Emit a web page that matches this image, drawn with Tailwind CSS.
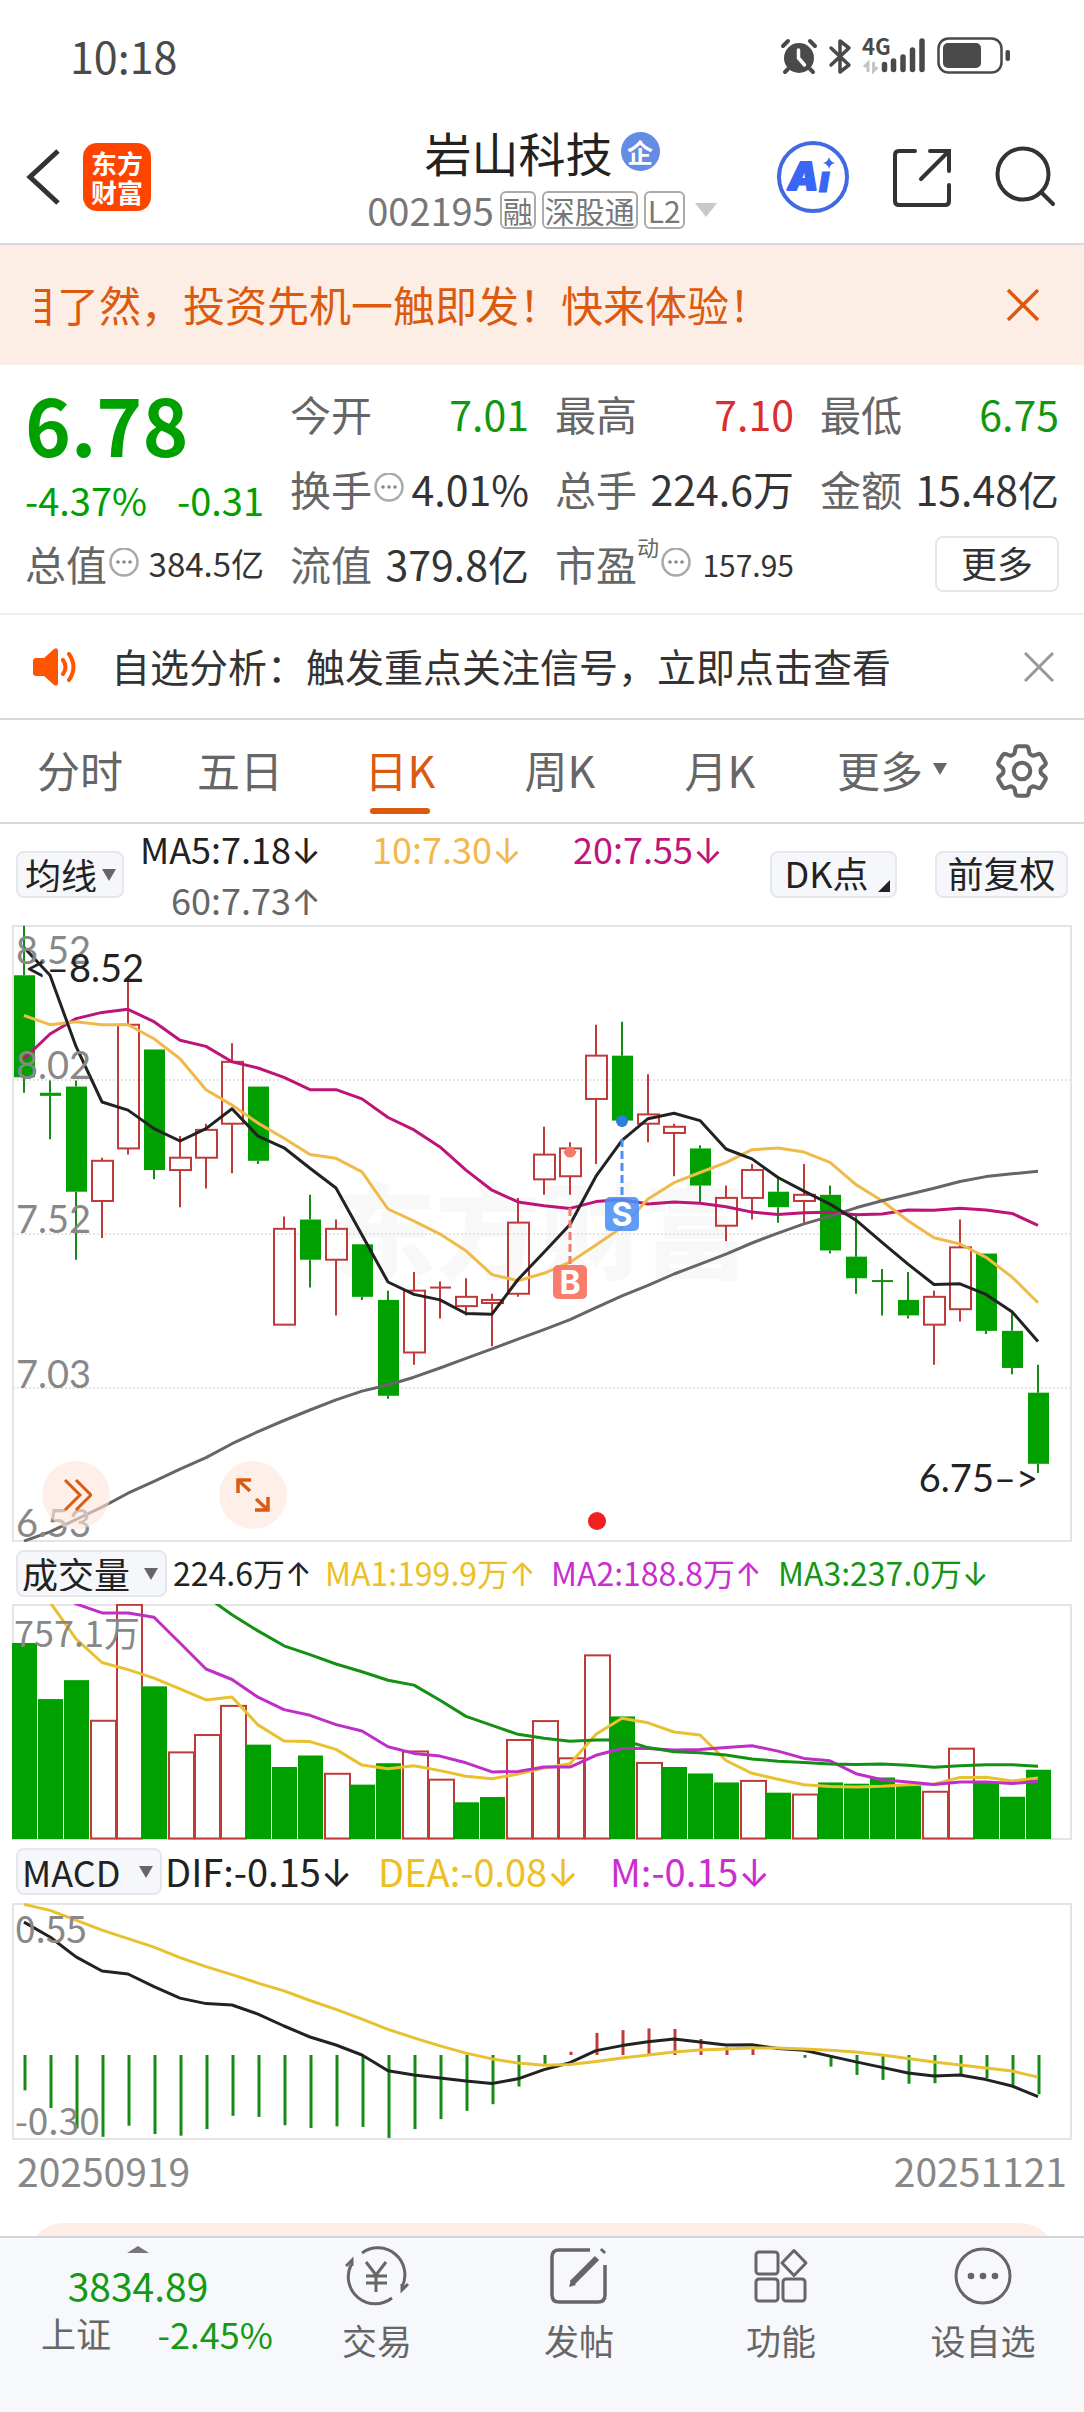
<!DOCTYPE html>
<html lang="zh-CN">
<head>
<meta charset="utf-8">
<meta name="viewport" content="width=device-width, initial-scale=1">
<title>岩山科技 002195</title>
<script src="https://cdn.jsdelivr.net/npm/@tailwindcss/browser@4"></script>
</head>
<body class="min-h-screen bg-white font-['Noto_Sans_CJK_SC',sans-serif] text-[#333] leading-none">
<div class="flex min-h-screen flex-col">

<!-- Status bar -->
<div class="flex h-[114px] items-center justify-between pl-[70px] pr-[74px] pb-[2px] text-[#4a4a4a]">
  <span class="pb-[2px] text-[43px]">10:18</span>
  <svg class="h-[40px] w-[230px] overflow-visible" viewBox="780 36 230 40" fill="none" stroke="#4a4a4a" aria-hidden="true">
    <circle cx="799" cy="58" r="15" fill="#4a4a4a" stroke="none"/>
    <path d="M783 46l5-5M815 46l-5-5M788 69l-3 3M810 69l3 3" stroke-width="4" stroke-linecap="round"/>
    <path d="M798.500 50v8l6 7" stroke="#fff" stroke-width="3.500" stroke-linecap="round"/>
    <path d="M831 48l18 17-9 7V41l9 7-18 17" stroke-width="3.5" stroke-linejoin="round" stroke-linecap="round"/>
    <text x="862" y="55" font-size="22" font-weight="700" fill="#4a4a4a" stroke="none" font-family="Noto Sans CJK SC">4G</text>
    <path d="M868 72V63l-4 4M873.500 62v9l4-4" stroke="#c4c4c4" stroke-width="3"/>
    <path d="M884.500 69.500v-5M893.500 69.500V61M903 69.500V57M912.500 69.500V50M922 69.500V41" stroke-width="5.500" stroke-linecap="round"/>
    <rect x="938.500" y="38.500" width="63" height="34" rx="10" stroke-width="2.500"/>
    <rect x="943" y="43" width="38" height="25" rx="5" fill="#4a4a4a" stroke="none"/>
    <rect x="1005.500" y="50" width="4.500" height="11" rx="2" fill="#4a4a4a" stroke="none"/>
  </svg>
</div>

<!-- Header -->
<header class="grid h-[131px] grid-cols-[1fr_auto_1fr] items-center border-b-2 border-[#d9d9d9] pb-1">
  <div class="flex items-center gap-[23px] pl-[26px]">
    <button aria-label="返回"><svg class="h-[56px] w-[34px]" viewBox="0 0 34 56" fill="none" stroke="#333" stroke-width="5"><path d="M32 2L4 28l28 26"/></svg></button>
    <a href="#" class="flex size-[68px] flex-col items-center justify-center rounded-[14px] bg-[#ff4400] text-[26px] leading-[29px] font-bold text-white"><span>东方</span><span>财富</span></a>
  </div>
  <div class="flex flex-col items-center">
    <div class="flex items-center gap-[8px]">
      <h1 class="text-[47px] leading-[54px] text-[#222]">岩山科技</h1>
      <span class="flex size-[39px] items-center justify-center rounded-full bg-[#648ce4] text-[26px] font-bold text-white">企</span>
    </div>
    <div class="mt-[12px] flex items-center gap-[6px] text-[#777]">
      <span class="text-[38px] leading-[34px]">002195</span>
      <span class="flex h-[38px] items-center rounded-[6px] border-2 border-[#aaa] px-[1px] text-[30px]">融</span>
      <span class="flex h-[38px] items-center rounded-[6px] border-2 border-[#aaa] px-[1px] text-[30px]">深股通</span>
      <span class="flex h-[38px] items-center rounded-[6px] border-2 border-[#aaa] px-[2px] text-[30px]">L2</span>
      <svg class="ml-[4px] h-[14px] w-[22px]" viewBox="0 0 22 14"><path d="M0 0h22L11 14z" fill="#c8c8c8"/></svg>
    </div>
  </div>
  <div class="flex items-center justify-end gap-[42px] pr-[28px]">
    <button aria-label="AI 助手"><svg class="size-[74px]" viewBox="0 0 74 74"><circle cx="37" cy="37" r="34" fill="none" stroke="#4169e1" stroke-width="4"/><g fill="#3a66f5" font-family="Inter" font-weight="900" font-style="italic"><text x="12" y="50" font-size="38" stroke="#3a66f5" stroke-width="2" stroke-linejoin="round">A</text><text x="43" y="52" font-size="36" stroke="#3a66f5">ı</text></g><path d="M53 17q1 5 6 6-5 1-6 6-1-5-6-6 5-1 6-6z" fill="#3a66f5"/></svg></button>
    <button aria-label="分享"><svg class="size-[60px]" viewBox="0 0 60 60" fill="none" stroke="#333" stroke-width="4" stroke-linecap="round"><path d="M23 4H7q-4 0-4 4v46q0 4 4 4h46q4 0 4-4V38M38 4h19v20M56 5L29 32"/></svg></button>
    <button aria-label="搜索"><svg class="size-[62px]" viewBox="0 0 62 62" fill="none" stroke="#333" stroke-width="4" stroke-linecap="round"><circle cx="29" cy="28" r="25.500"/><path d="M48 47l11 11"/></svg></button>
  </div>
</header>

<!-- Promo marquee -->
<div class="flex h-[120px] items-center justify-between bg-[#fceee5] pr-[44px] pl-[35px] text-[#dc5a10]">
  <div class="min-w-0 flex-1 overflow-hidden pb-[2px]"><a href="#" class="-ml-[20px] block text-[42px] leading-[60px] whitespace-nowrap">目了然，投资先机一触即发！快来体验！</a></div>
  <button aria-label="关闭广告"><svg class="size-[34px]" viewBox="0 0 34 34" stroke="currentColor" stroke-width="3.500"><path d="M2 2l30 30M32 2L2 32"/></svg></button>
</div>

<!-- Quote -->
<section class="grid grid-cols-4 gap-x-[26px] border-b-2 border-[#eee] px-[25px] pt-[11px] pb-[12px] text-[41px] whitespace-nowrap">
  <div class="row-span-2 flex flex-col text-[#00a000]">
    <strong class="mt-[3px] text-[78px] leading-[88px] font-bold">6.78</strong>
    <div class="flex justify-between pt-[13px] text-[38px] leading-[40px]"><span>-4.37%</span><span>-0.31</span></div>
  </div>
  <div class="flex h-[75px] items-center justify-between"><span class="text-[#666]">今开</span><span class="text-[#109610]">7.01</span></div>
  <div class="flex h-[75px] items-center justify-between"><span class="text-[#666]">最高</span><span class="text-[#d83030]">7.10</span></div>
  <div class="flex h-[75px] items-center justify-between"><span class="text-[#666]">最低</span><span class="text-[#109610]">6.75</span></div>
  <div class="flex h-[75px] items-center justify-between"><span class="flex items-center text-[#666]">换手<svg class="size-[32px]" viewBox="0 0 32 32"><use href="#info"/></svg></span><span>4.01%</span></div>
  <div class="flex h-[75px] items-center justify-between"><span class="text-[#666]">总手</span><span>224.6万</span></div>
  <div class="flex h-[75px] items-center justify-between"><span class="text-[#666]">金额</span><span>15.48亿</span></div>
  <div class="flex h-[75px] items-center justify-between"><span class="flex items-center text-[#666]">总值<svg class="size-[32px]" viewBox="0 0 32 32"><use href="#info"/></svg></span><span class="text-[33px]">384.5亿</span></div>
  <div class="flex h-[75px] items-center justify-between"><span class="text-[#666]">流值</span><span>379.8亿</span></div>
  <div class="flex h-[75px] items-center justify-between"><span class="flex items-center text-[#666]">市盈<span class="-mt-[36px] text-[22px]">动</span><svg class="size-[32px]" viewBox="0 0 32 32"><use href="#info"/></svg></span><span class="text-[30px]">157.95</span></div>
  <div class="flex h-[75px] items-center justify-end"><button class="h-[56px] w-[124px] rounded-[8px] border-2 border-[#e6e6e6] pb-[4px] text-[36px]">更多</button></div>
</section>

<!-- Notice -->
<div class="flex h-[105px] items-center border-b-2 border-[#d9d9d9] pr-[30px] pl-[33px]">
  <svg class="h-[38px] w-[46px]" viewBox="0 0 46 38" fill="none" stroke="#ff5500" aria-hidden="true"><path d="M0 13q0-3 3-3h8L21 1q4-2 4 2v32q0 4-4 2l-10-9H3q-3 0-3-3z" fill="#ff5500" stroke="none"/><path d="M30 12q5 7 0 14M36 6q9 13 0 26" stroke-width="4" stroke-linecap="round"/></svg>
  <a href="#" class="ml-[32px] flex-1 pb-[4px] text-[39px] leading-[44px] whitespace-nowrap">自选分析：触发重点关注信号，立即点击查看</a>
  <button aria-label="关闭提示"><svg class="size-[30px]" viewBox="0 0 30 30" stroke="#999" stroke-width="3"><path d="M1 1l28 28M29 1L1 29"/></svg></button>
</div>

<!-- Period tabs -->
<nav class="grid h-[104px] grid-cols-[repeat(6,160fr)_124fr] border-b-2 border-[#d9d9d9] text-[43px] text-[#666]">
  <button class="pb-[4px]">分时</button>
  <button class="pb-[4px]">五日</button>
  <button class="relative pb-[4px] text-[#dc5a10]">日K<span class="absolute bottom-[8px] left-1/2 h-[6px] w-[60px] -translate-x-1/2 rounded-full bg-[#dc5a10]"></span></button>
  <button class="pb-[4px]">周K</button>
  <button class="pb-[4px]">月K</button>
  <button class="flex items-center justify-center gap-[10px] pb-[4px] pl-[24px]">更多<svg class="h-[12px] w-[14px]" viewBox="0 0 14 12"><path d="M0 0h14L7 12z" fill="#666"/></svg></button>
  <button class="flex items-center justify-center" aria-label="设置"><svg class="size-[66px]" viewBox="0 0 24 24" fill="none" stroke="#666" stroke-width="1.500"><path d="M9.594 3.940c.09-.542.56-.94 1.110-.94h2.593c.55 0 1.020.398 1.110.94l.213 1.281c.063.374.313.686.645.87.074.04.147.083.22.127.324.196.72.257 1.075.124l1.217-.456a1.125 1.125 0 011.370.49l1.296 2.247a1.125 1.125 0 01-.26 1.431l-1.003.827c-.293.24-.438.613-.431.992a6.759 6.759 0 010 .255c-.007.378.138.75.43.99l1.005.828c.424.35.534.954.26 1.430l-1.298 2.247a1.125 1.125 0 01-1.369.491l-1.217-.456c-.355-.133-.75-.072-1.076.124a6.570 6.570 0 01-.22.128c-.331.183-.581.495-.644.869l-.213 1.280c-.09.543-.56.941-1.110.941h-2.594c-.55 0-1.020-.398-1.110-.94l-.213-1.281c-.062-.374-.312-.686-.644-.87a6.520 6.520 0 01-.22-.127c-.325-.196-.72-.257-1.076-.124l-1.217.456a1.125 1.125 0 01-1.369-.49l-1.297-2.247a1.125 1.125 0 01.26-1.431l1.004-.827c.292-.24.437-.613.43-.992a6.932 6.932 0 010-.255c.007-.378-.138-.75-.43-.99l-1.004-.828a1.125 1.125 0 01-.26-1.430l1.297-2.247a1.125 1.125 0 011.370-.491l1.216.456c.356.133.751.072 1.076-.124.072-.044.146-.087.22-.128.332-.183.582-.495.644-.869l.214-1.281z"/><circle cx="12" cy="12" r="3"/></svg></button>
</nav>

<!-- Moving averages -->
<div class="flex h-[101px] items-center px-[16px] text-[36px] text-[#222]">
  <label class="relative block">
    <span class="sr-only">主图指标</span>
    <select class="block h-[47px] w-[108px] appearance-none rounded-[8px] border-2 border-[#e4e7ec] bg-[#f6f7fa] pb-[4px] pl-[7px] text-[36px] leading-[42px]"><option>均线</option></select>
    <svg class="pointer-events-none absolute top-[18px] right-[8px] h-[12px] w-[14px]" viewBox="0 0 14 12"><path d="M0 0h14L7 12z" fill="#666"/></svg>
  </label>
  <div class="ml-[19px] grid grid-cols-[178px_201px_201px] justify-items-end leading-[48px] whitespace-nowrap">
    <span>MA5:7.18<span class="font-['Inter']">↓</span></span>
    <span class="text-[#f2b84b]">10:7.30<span class="font-['Inter']">↓</span></span>
    <span class="text-[#c0147c]">20:7.55<span class="font-['Inter']">↓</span></span>
    <span class="text-[#666]">60:7.73<span class="font-['Inter']">↑</span></span>
  </div>
  <div class="ml-auto flex gap-[38px]">
    <button class="relative h-[47px] w-[127px] rounded-[8px] border-2 border-[#e4e7ec] bg-[#f6f7fa] pr-[14px] pb-[6px] leading-[36px]">DK点<svg class="absolute right-[5px] bottom-[4px] size-[12px]" viewBox="0 0 12 12"><path d="M12 0v12H0z" fill="#222"/></svg></button>
    <button class="h-[47px] w-[133px] rounded-[8px] border-2 border-[#e4e7ec] bg-[#f6f7fa] pb-[6px] leading-[36px]">前复权</button>
  </div>
</div>

<!-- Candlestick chart -->
<div class="relative px-3">
  <svg id="kline" class="block h-auto w-full" viewBox="12 925 1060 617" role="img" aria-label="日K线图">
    <text x="540" y="1271" text-anchor="middle" font-size="104" font-weight="900" fill="#f8f8f8" font-family="Noto Sans CJK SC">东方财富</text>
    <rect x="13" y="926" width="1058" height="615" fill="none" stroke="#e4e4e4" stroke-width="2"/>
    <path d="M13 1080h1058M13 1234h1058M13 1388h1058" stroke="#e4e4e4" stroke-width="2" stroke-dasharray="2 2"/>
    <g id="candles"></g>
    <g id="averages" fill="none" stroke-width="3" stroke-linejoin="round"></g>
    <g font-family="Lato" font-size="38" fill="#888">
      <text x="16" y="964">8.52</text><text x="16" y="1079">8.02</text><text x="16" y="1233">7.52</text><text x="16" y="1388">7.03</text><text x="16" y="1537">6.53</text>
    </g>
    <g font-family="Lato" font-size="38" fill="#222">
      <text x="144" y="982" text-anchor="end">&lt;–8.52</text>
      <text x="1038" y="1492" text-anchor="end">6.75–&gt;</text>
    </g>
    <path d="M570 1208v56" stroke="#f4796b" stroke-width="3" stroke-dasharray="8 4"/>
    <path d="M563.500 1151h13a6.500 6 0 01-13 0z" fill="#f4796b"/><circle cx="570" cy="1152" r="5.500" fill="#f4796b"/>
    <rect x="553" y="1265" width="34" height="34" rx="5" fill="#f97d6d"/>
    <path d="M622 1121v6M622 1139v58" stroke="#4a90f0" stroke-width="3" stroke-dasharray="8 4"/>
    <circle cx="622" cy="1121" r="6" fill="#2a80d8"/>
    <rect x="605" y="1197" width="34" height="34" rx="5" fill="#4a90f8" fill-opacity=".88"/>
    <g font-family="Inter" font-weight="700" font-size="32" fill="#fff" text-anchor="middle"><text x="570" y="1294">B</text><text x="622" y="1226">S</text></g>
    <circle cx="597" cy="1521" r="9" fill="#f02020"/>
  </svg>
  <button class="absolute bottom-[13px] left-[42px] flex size-[68px] items-center justify-center rounded-full bg-[#fde6da]/60" aria-label="快进"><svg class="size-[32px]" viewBox="0 0 32 32" fill="none" stroke="#d95b14" stroke-width="3"><path d="M5 1l15 15L5 31M16 1l15 15-15 15"/></svg></button>
  <button class="absolute bottom-[13px] left-[219px] flex size-[68px] items-center justify-center rounded-full bg-[#fde6da]/60" aria-label="全屏"><svg class="size-[34px]" viewBox="0 0 34 34" fill="none" stroke="#d95b14" stroke-width="3.500"><path d="M2 15V2h13M2 2l12 11M32 19v13H19M32 32L20 21"/></svg></button>
</div>

<!-- Volume -->
<div class="flex h-[62px] items-center pl-[16px] text-[32px] whitespace-nowrap text-[#222]">
  <label class="relative mr-[6px] block">
    <span class="sr-only">副图指标一</span>
    <select class="block h-[47px] w-[151px] appearance-none rounded-[8px] border-2 border-[#e4e7ec] bg-[#f6f7fa] pb-[4px] pl-[4px] text-[36px] leading-[42px]"><option>成交量</option></select>
    <svg class="pointer-events-none absolute top-[18px] right-[9px] h-[12px] w-[14px]" viewBox="0 0 14 12"><path d="M0 0h14L7 12z" fill="#666"/></svg>
  </label>
  <span class="w-[152px]">224.6万<span class="font-['Inter']">↑</span></span>
  <span class="w-[226px] text-[#ecc025]">MA1:199.9万<span class="font-['Inter']">↑</span></span>
  <span class="w-[227px] text-[#c92fcf]">MA2:188.8万<span class="font-['Inter']">↑</span></span>
  <span class="text-[#149614]">MA3:237.0万<span class="font-['Inter']">↓</span></span>
</div>
<div class="px-3">
  <svg class="block h-auto w-full" viewBox="12 1604 1060 236" role="img" aria-label="成交量图">
    <clipPath id="volClip"><rect x="12" y="1604" width="1060" height="236"/></clipPath>
    <rect x="13" y="1605" width="1058" height="234" fill="none" stroke="#e4e4e4" stroke-width="2"/>
    <g clip-path="url(#volClip)"><g id="volumes"></g><g id="volAverages" fill="none" stroke-width="3" stroke-linejoin="round"></g></g>
    <text x="14" y="1647" font-family="Noto Sans CJK SC" font-size="36" fill="#888">757.1万</text>
  </svg>
</div>

<!-- MACD -->
<div class="flex h-[63px] items-center pl-[16px] text-[38px] whitespace-nowrap text-[#222]">
  <label class="relative mr-[3px] block">
    <span class="sr-only">副图指标二</span>
    <select class="block h-[47px] w-[146px] appearance-none rounded-[8px] border-2 border-[#e4e7ec] bg-[#f6f7fa] pb-[4px] pl-[4px] text-[36px] leading-[42px]"><option>MACD</option></select>
    <svg class="pointer-events-none absolute top-[18px] right-[9px] h-[12px] w-[14px]" viewBox="0 0 14 12"><path d="M0 0h14L7 12z" fill="#666"/></svg>
  </label>
  <span class="w-[213px]">DIF:-0.15<span class="font-['Inter']">↓</span></span>
  <span class="w-[232px] text-[#ecc025]">DEA:-0.08<span class="font-['Inter']">↓</span></span>
  <span class="text-[#c92fcf]">M:-0.15<span class="font-['Inter']">↓</span></span>
</div>
<div class="px-3">
  <svg class="block h-auto w-full" viewBox="12 1903 1060 237" role="img" aria-label="MACD图">
    <rect x="13" y="1904" width="1058" height="235" fill="none" stroke="#e4e4e4" stroke-width="2"/>
    <g id="macd" fill="none" stroke-width="3" stroke-linejoin="round"></g>
    <g font-family="Noto Sans CJK SC" font-size="37" fill="#888"><text x="15" y="1943">0.55</text><text x="15" y="2135">-0.30</text></g>
  </svg>
</div>
<div class="flex justify-between px-[17px] pt-[10px] text-[39px] leading-[40px] text-[#888]"><span>20250919</span><span>20251121</span></div>

<!-- Next card, cut off by the tab bar -->
<div class="mx-[28px] mt-auto h-[13px] overflow-hidden"><div class="h-[80px] rounded-[36px] bg-[#fceee5]"></div></div>

<!-- Bottom bar -->
<nav class="grid h-[176px] grid-cols-[276fr_repeat(4,202fr)] border-t-2 border-[#d2d4da] bg-[#f6f8fb] text-[35px] text-[#666]">
  <a href="#" class="flex flex-col items-center pt-[8px] text-[#159a15]">
    <svg class="h-[7px] w-[22px]" viewBox="0 0 22 7"><path d="M11 0l11 7H0z" fill="#777"/></svg>
    <span class="mt-[10px] text-[39px] leading-[44px]">3834.89</span>
    <span class="mt-[4px] flex w-full items-center justify-between pr-[3px] pl-[41px] leading-[44px]"><span class="text-[#666]">上证</span><span class="text-[36px]">-2.45%</span></span>
  </a>
  <a href="#" class="flex flex-col items-center pt-[6px]">
    <svg class="size-[64px]" viewBox="0 0 64 64" fill="none" stroke="#666" stroke-width="3"><path d="M17 9A27 27 0 0157 43M47 54A27 27 0 016 21M1 22l6-6v6M63 40l-6 6v-6M21 18l10 13 10-13M31 31v17M21 32h21M21 39h21"/></svg>
    <span class="mt-[10px] leading-[44px]">交易</span>
  </a>
  <a href="#" class="flex flex-col items-center pt-[6px]">
    <svg class="size-[64px]" viewBox="0 0 64 64" fill="none" stroke="#666" stroke-width="3.500"><path d="M43 6H12q-7 0-7 7v38q0 7 7 7h39q7 0 7-7V21"/><path d="M50 14L25 39M55 8l2-2" stroke-width="6"/><path d="M22 43l2-7 5 5z" fill="#666" stroke="none"/></svg>
    <span class="mt-[10px] leading-[44px]">发帖</span>
  </a>
  <a href="#" class="flex flex-col items-center pt-[6px]">
    <svg class="size-[64px]" viewBox="0 0 64 64" fill="none" stroke="#666" stroke-width="3" stroke-linejoin="round"><rect x="7" y="8" width="22" height="22" rx="3"/><rect x="7" y="35" width="22" height="22" rx="3"/><rect x="34" y="35" width="22" height="22" rx="3"/><path d="M45 6.500L57 19 45 31.500 33 19z"/></svg>
    <span class="mt-[10px] leading-[44px]">功能</span>
  </a>
  <a href="#" class="flex flex-col items-center pt-[6px]">
    <svg class="size-[64px]" viewBox="0 0 64 64"><circle cx="32" cy="32" r="27" fill="none" stroke="#666" stroke-width="3"/><g fill="#666"><circle cx="20" cy="32" r="3.300"/><circle cx="32" cy="32" r="3.300"/><circle cx="44" cy="32" r="3.300"/></g></svg>
    <span class="mt-[10px] leading-[44px]">设自选</span>
  </a>
</nav>
</div>

<svg class="hidden"><symbol id="info" viewBox="0 0 32 32"><circle cx="17" cy="14" r="13.500" fill="none" stroke="#aaa" stroke-width="2.500"/><g fill="#888"><circle cx="11" cy="14" r="1.800"/><circle cx="17" cy="14" r="1.800"/><circle cx="23" cy="14" r="1.800"/></g></symbol></svg>

<script>
const GREEN = '#00a000', WICK = '#168c16', RED = '#c03a3a';
// [open, high, low, close] per trading day
const days = [
  [8.36,8.52,7.98,8.03],[7.98,8.02,7.83,7.97],[8.00,8.02,7.44,7.66],[7.63,7.77,7.51,7.76],[7.80,8.35,7.78,8.20],
  [8.12,8.12,7.70,7.73],[7.73,7.84,7.61,7.77],[7.77,7.88,7.67,7.86],[7.88,8.14,7.72,8.08],[8.00,8.00,7.75,7.76],
  [7.23,7.58,7.23,7.54],[7.57,7.65,7.35,7.44],[7.44,7.57,7.26,7.54],[7.49,7.49,7.31,7.32],[7.31,7.34,6.99,7.00],
  [7.14,7.40,7.10,7.34],[7.35,7.37,7.25,7.35],[7.29,7.38,7.26,7.32],[7.30,7.33,7.16,7.31],[7.33,7.64,7.32,7.56],
  [7.70,7.87,7.65,7.78],[7.71,7.82,7.65,7.80],[7.96,8.20,7.75,8.10],[8.10,8.21,7.89,7.89],[7.88,8.04,7.82,7.91],
  [7.85,7.88,7.71,7.87],[7.80,7.81,7.62,7.68],[7.55,7.68,7.50,7.64],[7.64,7.75,7.57,7.73],[7.66,7.71,7.56,7.61],
  [7.63,7.75,7.56,7.65],[7.65,7.68,7.46,7.47],[7.45,7.59,7.33,7.38],[7.371,7.41,7.26,7.37],[7.31,7.40,7.25,7.26],
  [7.23,7.34,7.10,7.32],[7.28,7.57,7.24,7.48],[7.46,7.46,7.20,7.21],[7.21,7.27,7.07,7.09],[7.01,7.10,6.75,6.78]];
const volumes = [634,453,514,383,757,494,281,337,431,306,234,271,212,177,246,284,193,120,137,321,382,262,594,397,247,234,213,184,189,151,145,184,180,200,174,154,293,184,138,225];
const ma60 = [6.53,6.56,6.60,6.64,6.685,6.723,6.763,6.80,6.845,6.884,6.92,6.954,6.987,7.015,7.035,7.06,7.09,7.121,7.152,7.183,7.214,7.246,7.285,7.323,7.357,7.394,7.426,7.458,7.494,7.526,7.556,7.58,7.608,7.631,7.651,7.671,7.693,7.709,7.718,7.726];
const dif = [481,427,355,304,293,247,206,186,181,148,105,65,36,0,-57,-72,-83,-94,-103,-86,-53,-28,16,34,48,58,47,36,37,23,17,-4,-25,-45,-65,-76,-72,-89,-112,-151];
const dea = [545,523,488,452,421,390,352,320,291,260,232,197,165,130,93,62,33,7,-14,-29,-37,-34,-24,-11,0,11,18,22,25,25,22,17,11,0,-13,-25,-36,-47,-58,-80];

const x = i => 24 + 26 * i;
const priceY = p => 925.8 + (8.52 - p) / 1.99 * 615.3;
const volY = v => 1839.5 - v * 0.31;
const macdY = m => 2055 - m * 0.2764;

function draw(parent, tag, attrs) {
  const el = document.createElementNS('http://www.w3.org/2000/svg', tag);
  for (const k in attrs) el.setAttribute(k, attrs[k]);
  document.getElementById(parent).appendChild(el);
}
function line(parent, values, y, color) {
  const pts = values.map((v, i) => v == null ? null : x(i) + ',' + y(v).toFixed(1)).filter(Boolean).join(' ');
  draw(parent, 'polyline', { points: pts, stroke: color });
}
// Earlier days are not in the window, so the first values are supplied
function average(src, n, head) {
  return src.map((_, i) => i < n - 1 ? head[i] : src.slice(i - n + 1, i + 1).reduce((a, b) => a + b) / n);
}

days.forEach(([o, h, l, c], i) => {
  const up = c >= o, cx = x(i), top = priceY(Math.max(o, c)), bottom = priceY(Math.min(o, c));
  const wick = { stroke: up ? RED : WICK, 'stroke-width': 2, fill: 'none' };
  draw('candles', 'path', { d: `M${cx} ${priceY(h)}V${top}M${cx} ${bottom}V${priceY(l)}`, ...wick });
  if (bottom - top < 1) draw('candles', 'path', { d: `M${cx - 10} ${top}h21`, ...wick });
  else if (up) draw('candles', 'rect', { x: cx - 10, y: top, width: 21, height: bottom - top, fill: 'none', stroke: RED, 'stroke-width': 2 });
  else draw('candles', 'rect', { x: cx - 10, y: top, width: 21, height: Math.max(2, bottom - top), fill: GREEN });

  // Volume bars are coloured against the previous close
  const rise = i > 0 && c >= days[i - 1][3], vy = volY(volumes[i]);
  if (rise) draw('volumes', 'rect', { x: cx - 11, y: vy, width: 25, height: 1838.5 - vy, fill: '#fff', stroke: RED, 'stroke-width': 2 });
  else draw('volumes', 'rect', { x: cx - 12, y: vy, width: 25, height: 1839 - vy, fill: GREEN });

  const m = 2 * (dif[i] - dea[i]);
  if (Math.abs(m) > 5) draw('macd', 'path', { d: `M${cx + 1} 2055V${macdY(m)}`, stroke: m > 0 ? RED : WICK });
});
const closes = days.map(d => d[3]);
line('averages', average(closes, 20, [8.09,8.17,8.22,8.24,8.25,8.21,8.15,8.13,8.08,8.06,8.03,7.99,7.99,7.96,7.90,7.86,7.805,7.73,7.665]), priceY, '#bd1478');
line('averages', average(closes, 10, [8.23,8.20,8.21,8.20,8.20,8.155,8.09,7.99,7.94]), priceY, '#f0ba4a');
line('averages', ma60, priceY, '#666');
line('averages', average(closes, 5, [8.45,8.36,8.13,7.95]), priceY, '#222');
line('volAverages', average(volumes, 5, [900,765,647,571]), volY, '#e8c030');
line('volAverages', average(volumes, 10, [880,820,760,731,731,717,634,550,516]), volY, '#bf2fc8');
line('volAverages', average(volumes, 20, [null,null,null,null,null,null,null,785,725,673,625,596,566,541,514,498,449,397,368]), volY, '#149014');
line('macd', dif, macdY, '#222');
line('macd', dea, macdY, '#e8c030');
</script>
</body>
</html>
